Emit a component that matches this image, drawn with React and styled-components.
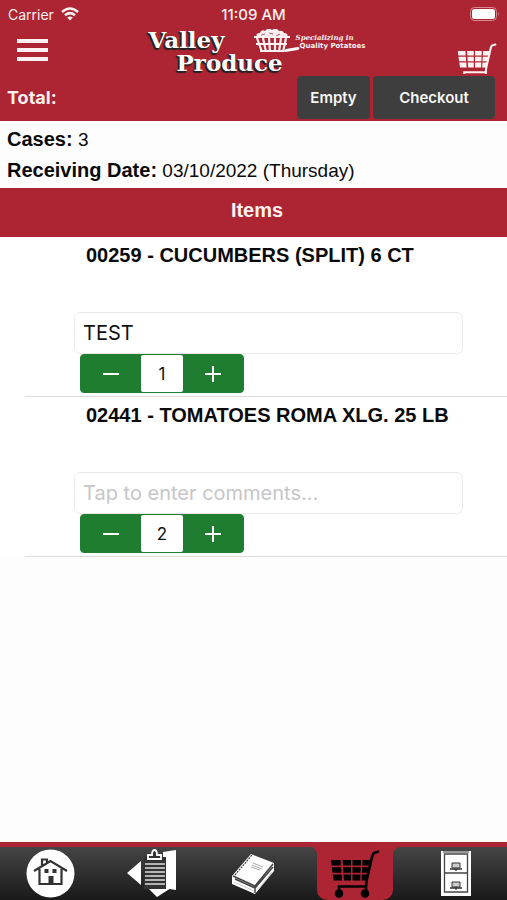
import { useState } from "react";
import styled, { createGlobalStyle } from "styled-components";

const red = "#ad2432";
const green = "#1f7d2f";
const sans = `"Liberation Sans", Arial, sans-serif`;
const system = `Inter, "Liberation Sans", sans-serif`;

const GlobalStyle = createGlobalStyle`
  * {
    box-sizing: border-box;
  }

  body {
    margin: 0;
    background: #fdfdfd;
    color: #0a0a0a;
    font-family: ${sans};
  }
`;

const Page = styled.div`
  display: flex;
  flex-direction: column;
  min-height: 100vh;
`;

const Header = styled.header`
  background: ${red};
  color: #fff1f1;
`;

const StatusBar = styled.div`
  display: grid;
  grid-template-columns: 1fr auto 1fr;
  align-items: center;
  height: 28px;
  padding: 0 8px;
  font: 500 15px ${system};
`;

const Carrier = styled.span`
  display: flex;
  align-items: center;
  gap: 7px;
  font-size: 14px;
  font-weight: 400;
`;

const Battery = styled.svg`
  justify-self: end;
`;

const BrandRow = styled.div`
  display: grid;
  grid-template-columns: 1fr auto 1fr;
  height: 46px;
  padding: 0 10px 0 17px;
`;

const MenuButton = styled.button`
  display: flex;
  flex-direction: column;
  gap: 5px;
  width: 31px;
  margin-top: 11px;
  padding: 0;
  border: 0;
  background: none;
  align-self: start;
`;

const MenuBar = styled.span`
  width: 100%;
  height: 4px;
  background: #fff1f1;
`;

const Logo = styled.div`
  display: flex;
`;

const LogoName = styled.div`
  display: grid;
  grid-template-columns: auto auto;
  grid-template-rows: 23px 23px;
  align-content: start;
  justify-content: start;
  font: bold 23px/23px "DejaVu Serif", serif;
  color: #fff;
  text-shadow: -1px 1px 0 #222, -2px 1px 0 #222, -1px 2px 1px #222;
`;

const LogoBottom = styled.span`
  grid-column: 1 / 3;
  padding-left: 28px;
`;

const Basket = styled.svg`
  margin: 1px 0 0 27px;
`;

const Slogan = styled.div`
  padding-top: 5px;
  font: bold 7px/9px "DejaVu Sans", sans-serif;
`;

const SloganTop = styled.em`
  display: block;
  margin-left: -4px;
  font-family: "DejaVu Serif", serif;
`;

const CartLink = styled.a`
  justify-self: end;
  height: 31px;
  margin-top: 15px;
  overflow: hidden;
  color: #fff1f1;
`;

const TotalRow = styled.div`
  display: flex;
  align-items: center;
  gap: 3px;
  height: 47px;
  padding: 0 12px 0 7px;
`;

const Total = styled.span`
  flex: 1;
  font: 700 18px ${system};
`;

const HeaderButton = styled.button`
  width: ${(props) => (props.$wide ? "122px" : "73px")};
  height: 43px;
  padding: 0;
  border: 0;
  border-radius: 4px;
  background: #3e3e3e;
  color: #f6f6f6;
  font: 600 15px ${system};
`;

const Summary = styled.section`
  padding: 3px 7px 2px;
  font-size: 19px;
  line-height: 31px;
`;

const SummaryLine = styled.p`
  margin: 0;
`;

const SummaryLabel = styled.b`
  font-size: 20px;
`;

const ItemsTitle = styled.h2`
  margin: 0;
  padding: 0 0 4px 7px;
  background: ${red};
  color: #fff1f1;
  font-size: 20px;
  line-height: 45px;
  text-align: center;
`;

const List = styled.ul`
  margin: 0;
  padding: 0 0 0 25px;
  background: #fff;
  list-style: none;
`;

const Item = styled.li`
  height: 160px;
  padding: 4px 44px 0 49px;
  border-bottom: 1px solid #dcdcdc;
`;

const ItemName = styled.h3`
  margin: 0 -40px 43px 12px;
  font-size: 20px;
  line-height: 28px;
`;

const Comment = styled.input`
  display: block;
  width: 100%;
  height: 42px;
  padding: 0 8px;
  border: 1px solid #ebebeb;
  border-radius: 6px;
  background: #fff;
  color: #111;
  font: 400 20px ${system};

  &::placeholder {
    color: #c6c6c8;
    opacity: 1;
  }
`;

const Stepper = styled.div`
  display: flex;
  width: 164px;
  height: 39px;
  margin-left: 6px;
  border: 1px solid ${green};
  border-radius: 4px;
  background: ${green};
`;

const StepButton = styled.button`
  display: grid;
  place-items: center;
  width: 60px;
  padding: 0;
  border: 0;
  background: none;
  color: #fff;
`;

const Quantity = styled.input`
  flex: 1;
  width: 0;
  padding: 0;
  border: 0;
  border-radius: 2px;
  background: #fff;
  color: #111;
  font: 400 17px ${system};
  text-align: center;
`;

const TabBar = styled.nav`
  display: grid;
  grid-template-columns: repeat(5, 1fr);
  height: 58px;
  margin-top: auto;
  border-top: 5px solid ${red};
  background: linear-gradient(#454545, #191919);
`;

const Tab = styled.a`
  display: flex;
  justify-content: center;
  align-items: center;
  color: #fff;
`;

const ActiveTab = styled(Tab)`
  position: relative;
  justify-self: center;
  width: 76px;
  border-radius: 0 0 10px 10px;
  background: ${red};
  color: #000;

  &::before,
  &::after {
    content: "";
    position: absolute;
    top: 0;
    width: 6px;
    height: 8px;
  }

  &::before {
    right: 100%;
    background: radial-gradient(ellipse 6px 8px at 0 100%, transparent 97%, ${red});
  }

  &::after {
    left: 100%;
    background: radial-gradient(ellipse 6px 8px at 100% 100%, transparent 97%, ${red});
  }
`;

const CartIcon = ({ width }) => (
  <svg width={width} viewBox="0 0 50 48" fill="currentColor" aria-hidden="true">
    <path d="M1 10h9.500l.4 5.500H1.600zM12.500 10H21v5.500h-8zM22.500 10H31l-.2 5.500h-8.300zM32.500 10h9l-1.300 5.500h-7.900zM1.800 17.200h9.300l.4 5.500H2.600zM13 17.200h8v5.500h-7.600zM22.500 17.200h8.200l-.2 5.500h-8zM32.200 17.200h7.600l-1.300 5.500h-6.600zM2.800 24.400h8.800l.5 6.100H3.700zM13.500 24.400H21v6.100h-7zM22.500 24.400h7.900l-.3 6.100h-7.600zM31.800 24.400h6.500l-1.400 6.100h-5.500z" />
    <path d="M48 1.800l-3.500 1Q43 3.300 42.300 6L41 11.500 36.500 31 36 36.500" fill="none" stroke="currentColor" strokeWidth="2.6" strokeLinecap="round" strokeLinejoin="round" />
    <path d="M9 42v-5.500h27V42" fill="none" stroke="currentColor" strokeWidth="2.6" />
    <circle cx="9" cy="43.5" r="4.3" />
    <circle cx="35" cy="43.5" r="4.3" />
  </svg>
);

const WifiIcon = () => (
  <svg width="18" height="14" viewBox="0 0 18 14" fill="none" stroke="currentColor" strokeWidth="2.5" aria-hidden="true">
    <path d="M1 5Q9-2 17 5M4 8.2Q9 4 14 8.2" />
    <path d="M6.2 10.5Q9 8.3 11.8 10.5L9 13.5z" fill="currentColor" stroke="none" />
  </svg>
);

const BasketIcon = () => (
  <Basket width="48" height="26" viewBox="0 0 48 26" aria-hidden="true">
    <path d="M5 8Q3 4 8 4q1-4 5-2 3-4 7-1 4-3 7 1 4-1 5 2 5 0 3 5z" fill="#fff1f1" />
    <path d="M9 6l4-1M17 4l4 1M24 7l4-2M14 8l3-1M29 8l3-1" stroke={red} strokeWidth=".8" />
    <path d="M2 8h36M5 9l5 14M11 9l3 14M17 9l1 14M23 9v14M29 9l-2 14M34 9l-3 14M4 15h31M8 22h24" fill="none" stroke="#fff1f1" strokeWidth="2.2" />
    <path d="M34 20l12-2q3 1 0 3l-13 2q-2-1 1-3z" fill="#fff" />
  </Basket>
);

const HomeIcon = () => (
  <svg width="49" height="49" viewBox="0 0 49 49" aria-hidden="true">
    <circle cx="24.5" cy="24.5" r="24" fill="#fff" />
    <path d="M8 22l16.500-10L41 22M13.500 20v15h22V20M16 17v-6.500h5V14" fill="none" stroke="#333" strokeWidth="2.2" />
    <path d="M18.500 20h4v4h-4zM26.500 20h4v4h-4zM22.500 27h5v8h-5z" fill="#333" />
  </svg>
);

const OrdersIcon = () => (
  <svg width="50" height="49" viewBox="0 0 50 49" aria-hidden="true">
    <path d="M14 12v24L0 24zM36 3l13-2v40l-13-2zM21 39h23l-14 9z" fill="#fff" />
    <path d="M17 8h22v32H17z" fill="#333" />
    <path d="M18 15h20M18 19h20M18 23h20M18 27h20M18 31h20M18 35h20" stroke="#ddd" strokeWidth="1.400" />
    <path d="M21 10V6h4q0-5 2.500-5T30 6h4v4z" fill="#333" stroke="#fff" strokeWidth="1.800" />
  </svg>
);

const BookIcon = () => (
  <svg width="44" height="42" viewBox="0 0 44 42" aria-hidden="true">
    <path d="M1 23L20 1l23 9v8L24 41 1 31z" fill="#fff" />
    <path d="M2 23l22 10 18-22M24 33v7M4 26l20 9 18-21" fill="none" stroke="#444" strokeWidth="1.500" />
    <path d="M4 22L21 2" stroke="#444" strokeWidth="1.200" strokeDasharray="2 1" />
    <path d="M22 10l10 4M21 12l10 4M20 14l9 3" stroke="#aaa" strokeWidth="1" />
    <path d="M3 29l20 9M27 37l14-18" stroke="#bbb" strokeWidth=".8" />
  </svg>
);

const CabinetIcon = () => (
  <svg width="30" height="45" viewBox="0 0 30 45" aria-hidden="true">
    <path d="M0 0h30v45H0z" fill="#fff" />
    <path d="M3.500 3h23v19h-23zM3.500 22h23v19h-23z" fill="none" stroke="#444" strokeWidth="1.300" />
    <path d="M2 1h26" stroke="#999" strokeWidth="2" />
    <path d="M11 12h8v5h-8zM11 31h8v5h-8z" fill="#ccc" stroke="#333" />
    <path d="M9 18h12M9 37h12M15 17v3M15 36v3" stroke="#333" strokeWidth="1.300" />
  </svg>
);

const StepIcon = ({ plus }) => (
  <svg width="16" height="16" viewBox="0 0 16 16" stroke="currentColor" strokeWidth="2" aria-hidden="true">
    <path d={plus ? "M0 8h16M8 0v16" : "M0 8h16"} />
  </svg>
);

const items = [
  { name: "00259 - CUCUMBERS (SPLIT) 6 CT", comment: "TEST", quantity: 1 },
  { name: "02441 - TOMATOES ROMA XLG. 25 LB", comment: "", quantity: 2 },
];

const CartItem = ({ item }) => {
  const [quantity, setQuantity] = useState(item.quantity);

  return (
    <Item>
      <ItemName>{item.name}</ItemName>
      <Comment
        aria-label="Comments"
        placeholder="Tap to enter comments..."
        defaultValue={item.comment}
      />
      <Stepper>
        <StepButton aria-label="Decrease" onClick={() => setQuantity(Math.max(0, Number(quantity) - 1))}>
          <StepIcon />
        </StepButton>
        <Quantity
          aria-label="Quantity"
          value={quantity}
          onChange={(e) => setQuantity(e.target.value)}
        />
        <StepButton aria-label="Increase" onClick={() => setQuantity(Number(quantity) + 1)}>
          <StepIcon plus />
        </StepButton>
      </Stepper>
    </Item>
  );
};

const App = () => {
  return (
    <Page>
      <GlobalStyle />
      <Header>
        <StatusBar>
          <Carrier>Carrier <WifiIcon /></Carrier>
          <span>11:09 AM</span>
          <Battery width="29" height="14" viewBox="0 0 29 14" aria-hidden="true">
            <rect x=".5" y=".5" width="26" height="13" rx="4" fill="none" stroke="#d98a92" />
            <rect x="2" y="2" width="23" height="10" rx="2.500" fill="#fff" />
            <path d="M28 5q1.500 2 0 4z" fill="#d98a92" />
          </Battery>
        </StatusBar>
        <BrandRow>
          <MenuButton aria-label="Menu">
            <MenuBar />
            <MenuBar />
            <MenuBar />
          </MenuButton>
          <Logo>
            <LogoName>
              <span>Valley</span>
              <BasketIcon />
              <LogoBottom>Produce</LogoBottom>
            </LogoName>
            <Slogan>
              <SloganTop>Specializing in</SloganTop>
              Quality Potatoes
            </Slogan>
          </Logo>
          <CartLink href="#cart" aria-label="Cart">
            <CartIcon width="40" />
          </CartLink>
        </BrandRow>
        <TotalRow>
          <Total>Total:</Total>
          <HeaderButton>Empty</HeaderButton>
          <HeaderButton $wide>Checkout</HeaderButton>
        </TotalRow>
      </Header>
      <Summary>
        <SummaryLine><SummaryLabel>Cases:</SummaryLabel> 3</SummaryLine>
        <SummaryLine><SummaryLabel>Receiving Date:</SummaryLabel> 03/10/2022 (Thursday)</SummaryLine>
      </Summary>
      <ItemsTitle>Items</ItemsTitle>
      <List>
        {items.map((item) => (
          <CartItem key={item.name} item={item} />
        ))}
      </List>
      <TabBar>
        <Tab href="#home" aria-label="Home"><HomeIcon /></Tab>
        <Tab href="#orders" aria-label="Orders"><OrdersIcon /></Tab>
        <Tab href="#catalog" aria-label="Catalog"><BookIcon /></Tab>
        <ActiveTab href="#cart" aria-label="Cart"><CartIcon width="50" /></ActiveTab>
        <Tab href="#archive" aria-label="Archive"><CabinetIcon /></Tab>
      </TabBar>
    </Page>
  );
};

export default App;
